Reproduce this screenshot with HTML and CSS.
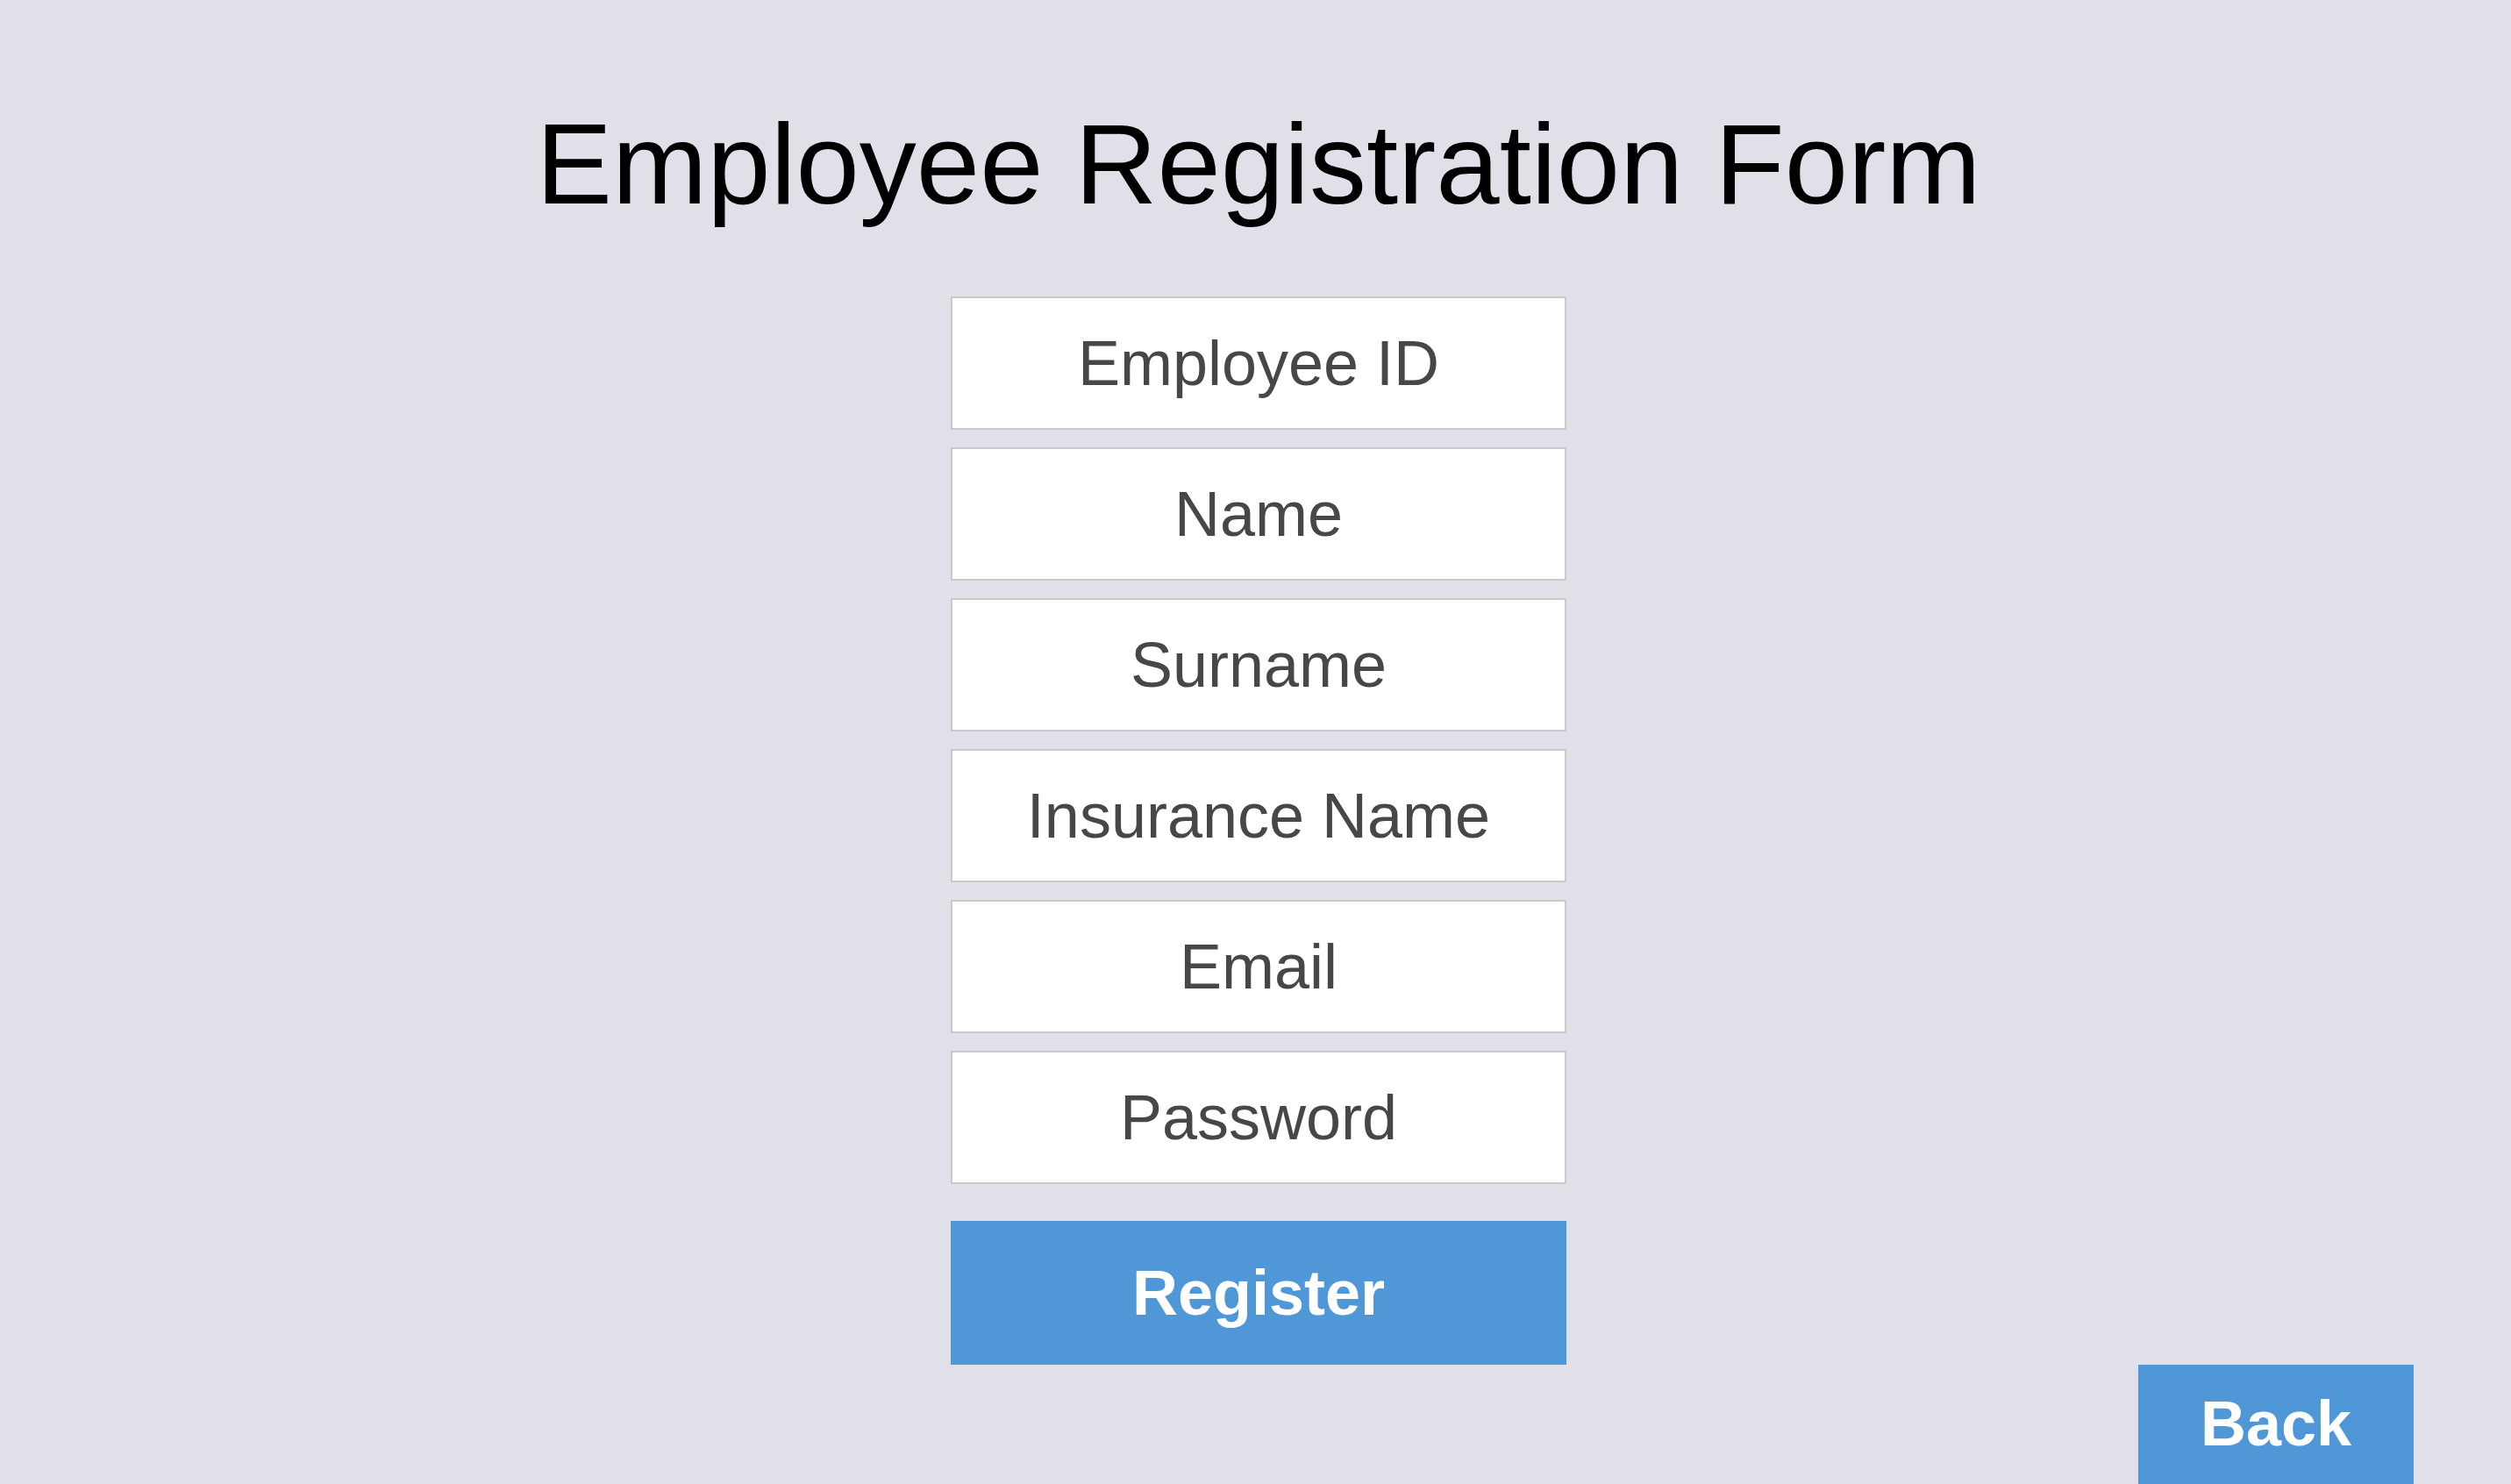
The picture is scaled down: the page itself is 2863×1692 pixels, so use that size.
FILE: index.html
```html
<!DOCTYPE html>
<html lang="en">
<head>
<meta charset="utf-8">
<title>Employee Registration Form</title>
<link rel="stylesheet" href="styles.css">
</head>
<body>
<main class="page">
  <h1 class="title">Employee Registration Form</h1>
  <form class="form">
    <input class="field" type="text" placeholder="Employee ID">
    <input class="field" type="text" placeholder="Name">
    <input class="field" type="text" placeholder="Surname">
    <input class="field" type="text" placeholder="Insurance Name">
    <input class="field" type="email" placeholder="Email">
    <input class="field" type="password" placeholder="Password">
    <button class="btn btn-register" type="button">Register</button>
  </form>
  <div class="back-row">
    <button class="btn btn-back" type="button">Back</button>
  </div>
</main>
</body>
</html>
```

FILE: styles.css
```css
html, body {
  margin: 0;
  padding: 0;
  height: 100%;
  overflow: hidden;
}

body {
  background: #e1e0e8;
  font-family: "Liberation Sans", Arial, sans-serif;
}

.page {
  display: flex;
  flex-direction: column;
  align-items: center;
  padding-top: 112px;
  padding-left: 7px;
}

.title {
  margin: 0 0 76px 0;
  font-size: 130px;
  line-height: 150px;
  font-weight: 400;
  color: #000;
  white-space: nowrap;
}

.form {
  display: flex;
  flex-direction: column;
  gap: 20px;
  width: 702px;
}

.field {
  box-sizing: border-box;
  width: 702px;
  height: 152px;
  margin: 0;
  border: 2px solid #c9c9cb;
  background: #fff;
  font-family: "Liberation Sans", Arial, sans-serif;
  font-size: 72px;
  color: #444;
  text-align: center;
  padding: 0;
  outline: none;
}

.field::placeholder {
  color: #474747;
  opacity: 1;
}

.btn {
  box-sizing: border-box;
  border: none;
  margin: 0;
  padding: 0;
  background: #4f97d6;
  color: #fff;
  font-family: "Liberation Sans", Arial, sans-serif;
  font-weight: 700;
  font-size: 72px;
  cursor: pointer;
}

.btn-register {
  width: 702px;
  height: 164px;
  margin-top: 22px;
}

.back-row {
  align-self: stretch;
  display: flex;
  justify-content: flex-end;
  padding-right: 111px;
}

.btn-back {
  width: 314px;
  height: 150px;
  padding-bottom: 16px;
}
```
